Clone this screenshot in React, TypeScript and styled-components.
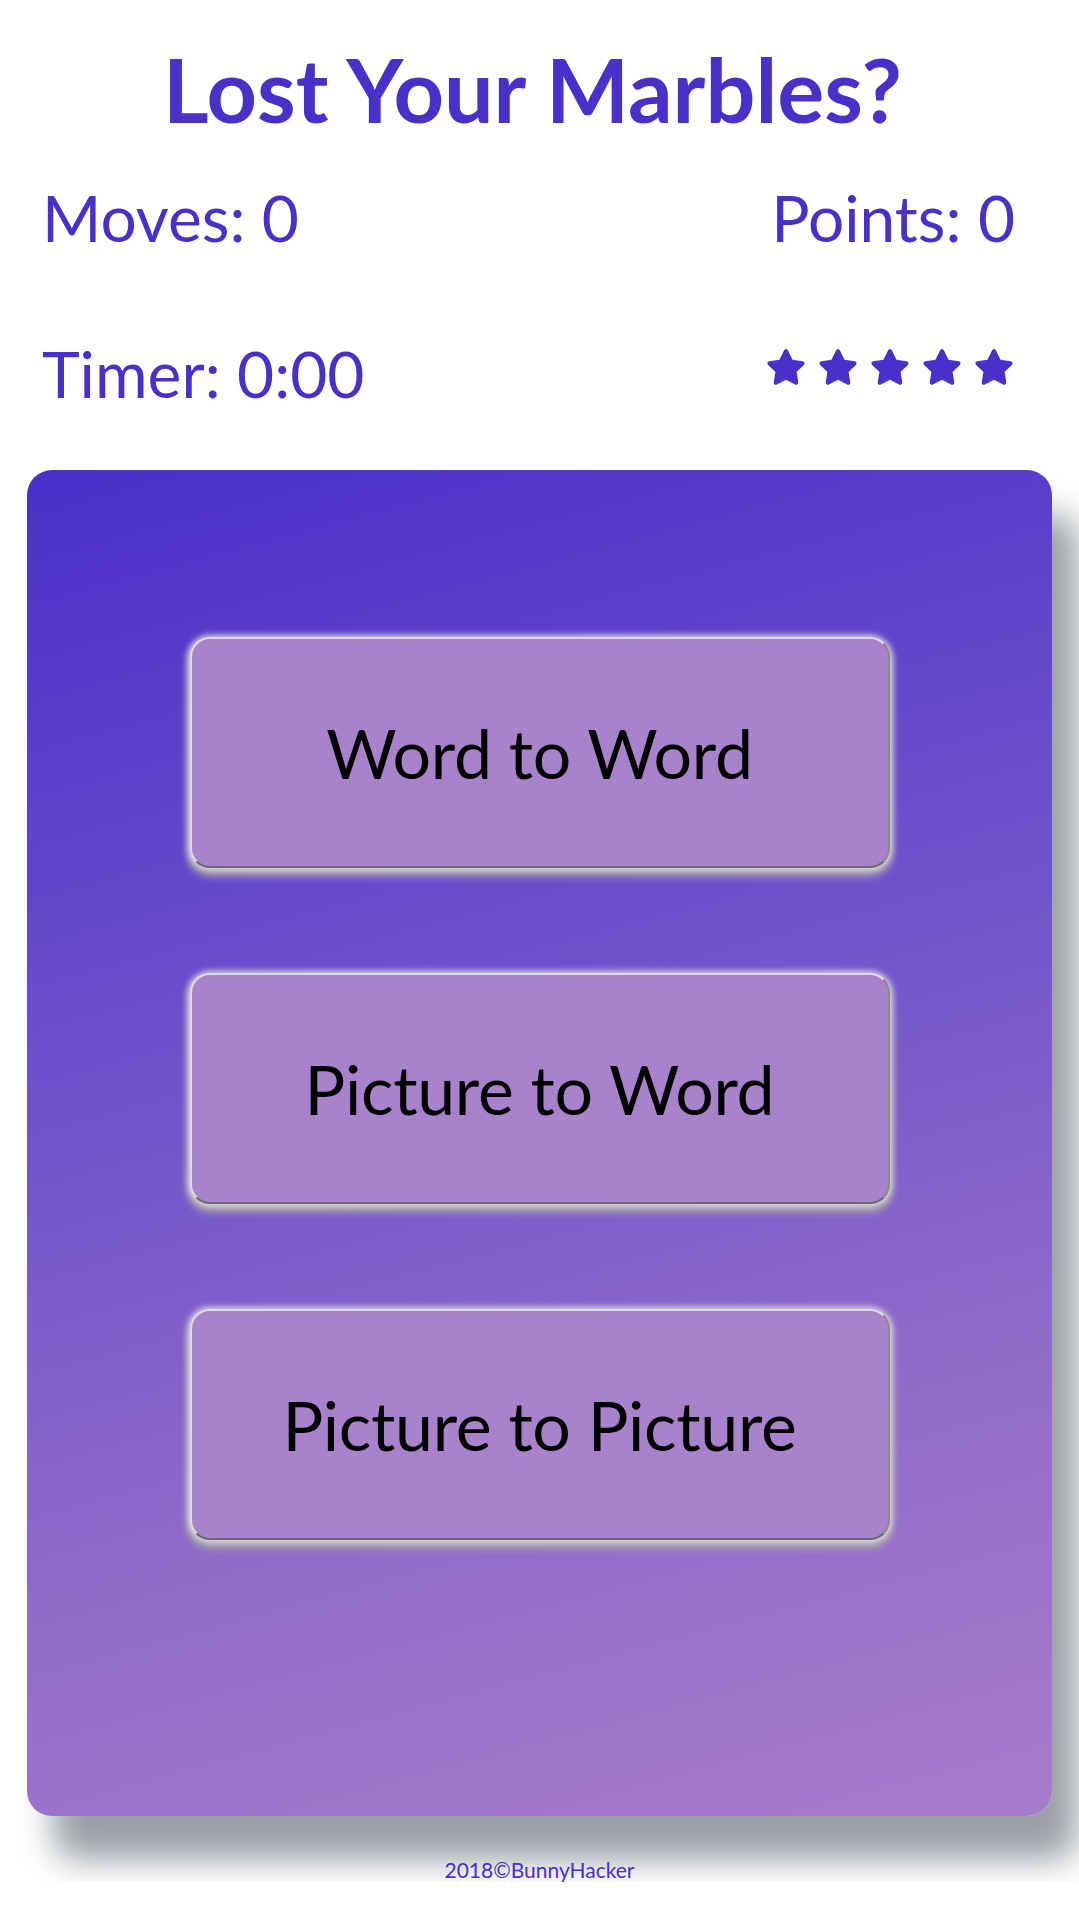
import React from "react";
import styled, { createGlobalStyle } from "styled-components";
import { FaStar } from "react-icons/fa";

const Global = createGlobalStyle`
  html, body { margin: 0; padding: 0; background: #ffffff; }
  body { font-family: Lato, "Open Sans", sans-serif; }
`;

const Page = styled.div`
  width: 1079px;
  display: flex;
  flex-direction: column;
  align-items: stretch;
  padding-top: 36px;
`;

const Title = styled.h1`
  margin: 0;
  padding-right: 14px;
  font-family: Lato, sans-serif;
  font-weight: 700;
  font-size: 88px;
  line-height: normal;
  color: #4a2fc8;
  text-align: center;
`;

const Stats = styled.div`
  display: grid;
  grid-template-columns: 1fr auto;
  row-gap: 79px;
  padding: 37px 64px 0 42px;
  align-items: center;
`;

const Stat = styled.div<{ $right?: boolean }>`
  font-family: Lato, sans-serif;
  font-weight: 400;
  font-size: 64px;
  line-height: normal;
  color: #4a2fc8;
  text-align: ${(p) => (p.$right ? "right" : "left")};
`;

const Stars = styled.div`
  display: flex;
  gap: 12px;
  color: #4a2fc8;
  justify-content: flex-end;
  margin-right: 1px;
  margin-top: -14px;
`;

const Panel = styled.main`
  margin: 58px 27px 0;
  border-radius: 25px;
  background: linear-gradient(165deg, #4a2fc9 0%, #6a4ecb 35%, #8f6bca 70%, #a77ccb 100%);
  box-shadow: 26px 44px 34px #9aa0a6;
  display: flex;
  flex-direction: column;
  align-items: center;
  gap: 105px;
  padding: 167px 0 276px;
`;

const ModeButton = styled.button`
  box-sizing: border-box;
  width: 700px;
  height: 231px;
  background: #a982cc;
  border-radius: 20px;
  border-width: 2px;
  border-style: solid;
  border-color: #dcdcdc #8a8a8a #6a6a6a #dcdcdc;
  box-shadow: 0 0 6px 2px rgba(235, 232, 240, 0.85), 0 6px 8px 2px #a9a9a9;
  font-family: Lato, sans-serif;
  font-size: 68px;
  font-weight: 400;
  letter-spacing: -0.3px;
  color: #000000;
  cursor: pointer;
  padding: 0;
`;

const Footer = styled.footer`
  margin-top: 41px;
  text-align: center;
  font-family: Lato, sans-serif;
  font-size: 21px;
  line-height: normal;
  color: #4a2fc8;
`;

export default function App() {
  return (
    <Page>
      <Global />
      <Title>Lost Your Marbles?</Title>
      <Stats>
        <Stat>Moves: 0</Stat>
        <Stat $right>Points: 0</Stat>
        <Stat>Timer: 0:00</Stat>
        <Stars>
          {[0, 1, 2, 3, 4].map((i) => (
            <FaStar key={i} size={40} />
          ))}
        </Stars>
      </Stats>
      <Panel>
        <ModeButton>Word to Word</ModeButton>
        <ModeButton>Picture to Word</ModeButton>
        <ModeButton>Picture to Picture</ModeButton>
      </Panel>
      <Footer>2018©BunnyHacker</Footer>
    </Page>
  );
}
